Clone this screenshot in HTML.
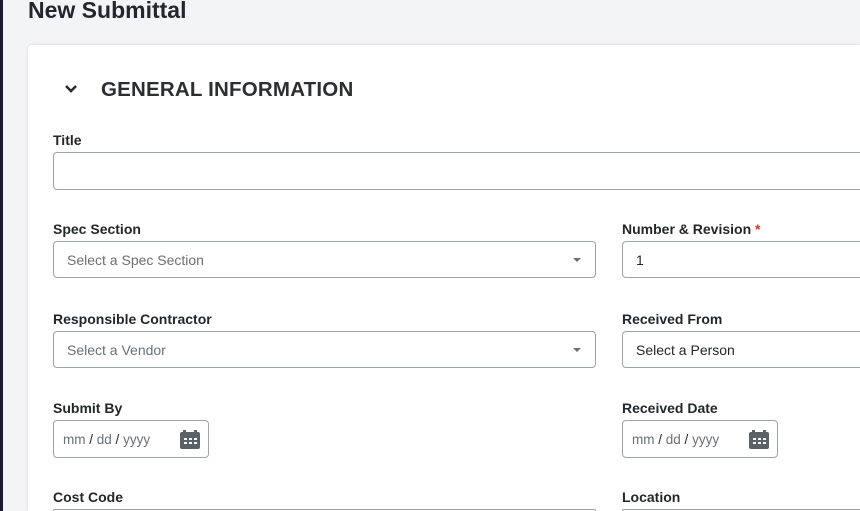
<!DOCTYPE html>
<html style="overflow:hidden;height:511px"><head><style>
body{margin:0;width:860px;height:511px;overflow:hidden;background:#f3f4f5;font-family:"Liberation Sans",sans-serif;color:#232729;position:relative}
.strip{position:absolute;left:0;top:0;width:3px;height:511px;background:#1d1b33}
h1{position:absolute;left:28px;top:-3px;margin:0;font-size:23px;font-weight:bold;letter-spacing:0px}
.card{position:absolute;left:28px;top:45px;width:832px;height:466px;background:#fff;border-radius:4px 0 0 0;box-shadow:0 0 3px rgba(0,0,0,.12)}
.sec{position:absolute;left:101px;top:78px;font-size:20.5px;font-weight:bold;color:#2b2f31;letter-spacing:0.2px}
.lbl{position:absolute;font-size:14px;font-weight:bold;letter-spacing:0}
.in{position:absolute;box-sizing:border-box;border:1px solid #9ea3a6;border-radius:4px;background:#fff;font-size:14px;color:#6a7074;padding-left:13px;display:flex;align-items:center}
.car{position:absolute;right:14px;top:16px;width:0;height:0;border-left:4px solid transparent;border-right:4px solid transparent;border-top:4px solid #6a7074}
.dt b{color:#232729;font-weight:normal}
.ic{position:absolute;right:8px;top:9px}
</style></head><body>
<div class="strip"></div>
<h1>New Submittal</h1>
<div class="card"></div>
<svg style="position:absolute;left:64px;top:84px" width="14" height="10"><path d="M2 2 L7 7 L12 2" stroke="#2b2f31" stroke-width="2.6" fill="none"/></svg>
<div class="sec">GENERAL INFORMATION</div>
<div class="lbl" style="left:53px;top:132px">Title</div>
<div class="in" style="left:53px;top:152px;width:807px;height:38px;border-right:none;border-radius:4px 0 0 4px"></div>
<div class="lbl" style="left:53px;top:221px">Spec Section</div>
<div class="in" style="left:53px;top:241px;width:543px;height:37px">Select a Spec Section<span class="car"></span></div>
<div class="lbl" style="left:622px;top:221px">Number &amp; Revision <span style="color:#e0322b">*</span></div>
<div class="in" style="left:622px;top:241px;width:238px;height:37px;color:#232729;border-right:none;border-radius:4px 0 0 4px">1</div>
<div class="lbl" style="left:53px;top:311px">Responsible Contractor</div>
<div class="in" style="left:53px;top:331px;width:543px;height:37px">Select a Vendor<span class="car"></span></div>
<div class="lbl" style="left:622px;top:311px">Received From</div>
<div class="in" style="left:622px;top:331px;width:238px;height:37px;color:#232729;border-right:none;border-radius:4px 0 0 4px">Select a Person</div>
<div class="lbl" style="left:53px;top:400px">Submit By</div>
<div class="in dt" style="left:53px;top:420px;width:156px;height:38px;padding-left:9px;font-size:13.5px">mm <b>&nbsp;/&nbsp;</b> dd <b>&nbsp;/&nbsp;</b> yyyy
<svg class="ic" width="20" height="20"><rect x="0" y="2" width="20" height="17" rx="2" fill="#5b6267"/><rect x="3" y="0" width="3" height="4" fill="#5b6267"/><rect x="14" y="0" width="3" height="4" fill="#5b6267"/><g fill="#fff"><rect x="4" y="8" width="3" height="2"/><rect x="9" y="8" width="3" height="2"/><rect x="14" y="8" width="3" height="2"/><rect x="4" y="12" width="3" height="2"/><rect x="9" y="12" width="3" height="2"/><rect x="14" y="12" width="3" height="2"/></g></svg></div>
<div class="lbl" style="left:622px;top:400px">Received Date</div>
<div class="in dt" style="left:622px;top:420px;width:156px;height:38px;padding-left:9px;font-size:13.5px">mm <b>&nbsp;/&nbsp;</b> dd <b>&nbsp;/&nbsp;</b> yyyy
<svg class="ic" width="20" height="20"><rect x="0" y="2" width="20" height="17" rx="2" fill="#5b6267"/><rect x="3" y="0" width="3" height="4" fill="#5b6267"/><rect x="14" y="0" width="3" height="4" fill="#5b6267"/><g fill="#fff"><rect x="4" y="8" width="3" height="2"/><rect x="9" y="8" width="3" height="2"/><rect x="14" y="8" width="3" height="2"/><rect x="4" y="12" width="3" height="2"/><rect x="9" y="12" width="3" height="2"/><rect x="14" y="12" width="3" height="2"/></g></svg></div>
<div class="lbl" style="left:53px;top:489px">Cost Code</div>
<div class="in" style="left:53px;top:509px;width:543px;height:2px;border-bottom:none;border-radius:4px 4px 0 0"></div>
<div class="lbl" style="left:622px;top:489px">Location</div>
<div class="in" style="left:622px;top:509px;width:238px;height:2px;border-bottom:none;border-right:none;border-radius:4px 0 0 0"></div>
</body></html>
